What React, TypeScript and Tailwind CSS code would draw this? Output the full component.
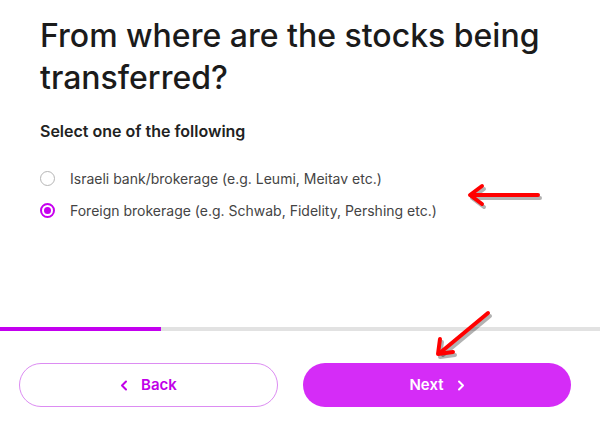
import React from "react";

function Radio({ checked }: { checked?: boolean }) {
  return checked ? (
    <span className="flex h-[15px] w-[15px] items-center justify-center rounded-full border-2 border-[#c600ee]">
      <span className="h-[7px] w-[7px] rounded-full bg-[#c600ee]" />
    </span>
  ) : (
    <span className="h-[15px] w-[15px] rounded-full border-[1.5px] border-[#b5b5b5]" />
  );
}

export default function App() {
  return (
    <div
      className="relative flex h-[422px] w-[600px] flex-col overflow-hidden bg-white"
      style={{ fontFamily: "Inter, 'Open Sans', sans-serif" }}
    >
      <h1 className="mt-[15px] px-[40px] text-[32px] font-medium leading-[42px] text-[#1b1b1b]">
        From where are the stocks being
        <br />
        transferred?
      </h1>
      <p className="mt-[22px] px-[40px] text-[16px] font-semibold leading-[20px] text-[#222]">
        Select one of the following
      </p>
      <div className="mt-[25px] flex flex-col gap-[8px] pl-[40px]">
        <label className="flex h-[24px] items-center gap-[15px] text-[14px] text-[#444]">
          <Radio />
          <span>Israeli bank/brokerage (e.g. Leumi, Meitav etc.)</span>
        </label>
        <label className="flex h-[24px] items-center gap-[15px] text-[14px] text-[#444]">
          <Radio checked />
          <span>Foreign brokerage (e.g. Schwab, Fidelity, Pershing etc.)</span>
        </label>
      </div>

      <div className="mt-auto flex flex-col pb-[15px]">
        <div className="flex h-[4px] w-full bg-[#e2e2e2]">
          <div className="h-full w-[161px] bg-[#c300ef]" />
        </div>
        <div className="mt-[32px] flex gap-[25px] pl-[19px]">
          <button className="flex h-[44px] w-[259px] items-center justify-center gap-[13px] rounded-full border border-[#dc8cf2] text-[15px] font-semibold text-[#c100e8]">
            <svg width="8" height="11" viewBox="0 0 8 11" fill="none">
              <path d="M6 1.5L2 5.5L6 9.5" stroke="#c100e8" strokeWidth="2" strokeLinecap="round" strokeLinejoin="round" />
            </svg>
            <span>Back</span>
          </button>
          <button className="flex h-[44px] w-[268px] items-center justify-center gap-[13px] rounded-full bg-[#d52cf7] text-[15px] font-semibold text-white">
            <span>Next</span>
            <svg width="8" height="11" viewBox="0 0 8 11" fill="none">
              <path d="M2 1.5L6 5.5L2 9.5" stroke="white" strokeWidth="2" strokeLinecap="round" strokeLinejoin="round" />
            </svg>
          </button>
        </div>
      </div>

      <svg className="pointer-events-none absolute left-0 top-0" width="600" height="422" viewBox="0 0 600 422">
        <g stroke="rgba(0,0,0,0.3)" strokeWidth="4" strokeLinecap="round" strokeLinejoin="round" fill="none" transform="translate(2,3)">
          <path d="M538 195 L472 195" />
          <path d="M482 186 L470 195 L482 204" />
          <path d="M488 313 L441 352" />
          <path d="M440 339 L438 354 L453 352" />
        </g>
        <g stroke="#ff0000" strokeWidth="4" strokeLinecap="round" strokeLinejoin="round" fill="none">
          <path d="M538 195 L472 195" />
          <path d="M482 186 L470 195 L482 204" />
          <path d="M488 313 L441 352" />
          <path d="M440 339 L438 354 L453 352" />
        </g>
      </svg>
    </div>
  );
}
